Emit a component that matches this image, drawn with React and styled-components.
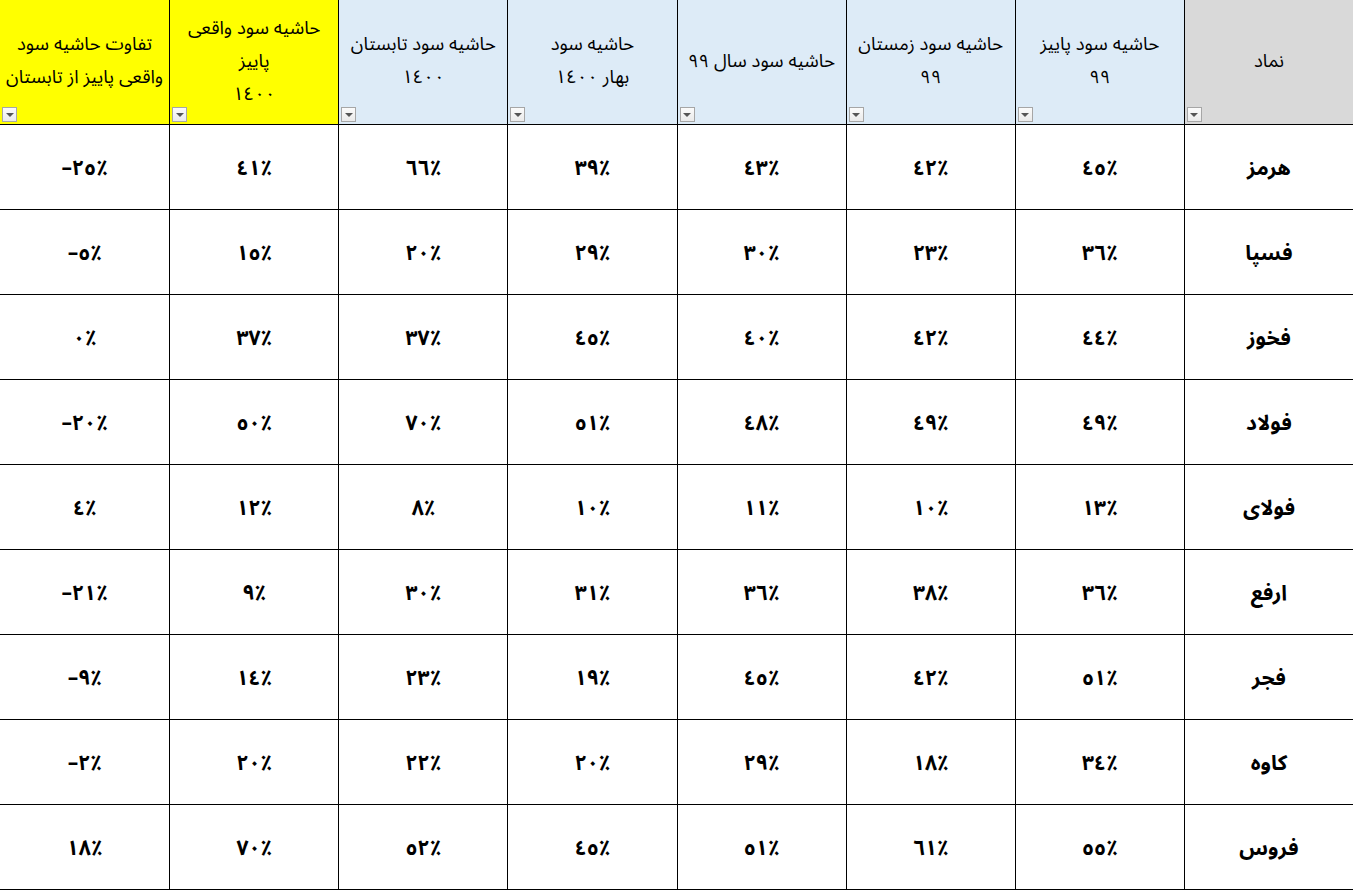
import React from "react";
import styled, { createGlobalStyle } from "styled-components";

const GlobalStyle = createGlobalStyle`
  html, body {
    margin: 0;
    padding: 0;
    background: #ffffff;
  }
  body {
    font-family: "Noto Sans Arabic", "DejaVu Sans", sans-serif;
  }
`;

const toArabic = n =>
  String(n).replace(/[0-9]/g, d => "٠١٢٣٤٥٦٧٨٩"[d]);

const Sheet = styled.div`
  width: 1353px;
  display: grid;
  grid-template-columns: repeat(8, 1fr);
  direction: rtl;
  color: #000;
`;

const headBg = {
  name: "#d9d9d9",
  blue: "#ddebf7",
  yellow: "#ffff00",
};

const HeadCell = styled.div`
  position: relative;
  height: 125px;
  box-sizing: border-box;
  background: ${p => headBg[p.$tone]};
  border-bottom: 1px solid #000;
  border-left: ${p => (p.$last ? "none" : "1px solid #000")};
  display: flex;
  align-items: center;
  justify-content: center;
  padding-bottom: 2px;
`;

const HeadText = styled.div`
  font-size: 18.5px;
  line-height: 33px;
  text-align: center;
  white-space: pre-line;
`;

const Filter = styled.span`
  position: absolute;
  left: 2px;
  bottom: 2px;
  width: 15px;
  height: 15px;
  box-sizing: border-box;
  border: 1px solid #a6a6a6;
  background: linear-gradient(#fbfbfb, #eaeaea);
  display: flex;
  align-items: center;
  justify-content: center;

  &::after {
    content: "";
    border-left: 4px solid transparent;
    border-right: 4px solid transparent;
    border-top: 4px solid #555;
    margin-top: 1px;
  }
`;

const Cell = styled.div`
  height: 85px;
  box-sizing: border-box;
  border-bottom: 1px solid #000;
  border-left: ${p => (p.$last ? "none" : "1px solid #000")};
  display: flex;
  align-items: center;
  justify-content: center;
  font-size: 21px;
  font-weight: bold;
  padding-top: 2px;
`;

const Value = styled.span`
  direction: ltr;
  unicode-bidi: isolate;
`;

const headers = [
  { text: "نماد", tone: "name" },
  { text: "حاشیه سود پاییز\n٩٩", tone: "blue" },
  { text: "حاشیه سود زمستان\n٩٩", tone: "blue" },
  { text: "حاشیه سود  سال ٩٩", tone: "blue" },
  { text: "حاشیه سود\nبهار  ١٤٠٠", tone: "blue" },
  { text: "حاشیه سود تابستان\n١٤٠٠", tone: "blue" },
  { text: "حاشیه سود واقعی\nپاییز\n١٤٠٠", tone: "yellow" },
  { text: "تفاوت حاشیه سود\nواقعی پاییز از تابستان", tone: "yellow" },
];

const rows = [
  ["هرمز", 45, 42, 43, 39, 66, 41, -25],
  ["فسپا", 36, 23, 30, 29, 20, 15, -5],
  ["فخوز", 44, 42, 40, 45, 37, 37, 0],
  ["فولاد", 49, 49, 48, 51, 70, 50, -20],
  ["فولای", 13, 10, 11, 10, 8, 12, 4],
  ["ارفع", 36, 38, 36, 31, 30, 9, -21],
  ["فجر", 51, 42, 45, 19, 23, 14, -9],
  ["کاوه", 34, 18, 29, 20, 22, 20, -2],
  ["فروس", 55, 61, 51, 45, 52, 70, 18],
];

const formatPct = v => (v < 0 ? "–" : "") + toArabic(Math.abs(v)) + "٪";

export default function App() {
  return (
    <>
      <GlobalStyle />
      <Sheet>
        {headers.map((h, i) => (
          <HeadCell key={i} $tone={h.tone} $last={i === headers.length - 1}>
            <HeadText>{h.text}</HeadText>
            <Filter />
          </HeadCell>
        ))}
        {rows.map((row, r) =>
          row.map((v, c) => (
            <Cell key={r + "-" + c} $last={c === row.length - 1}>
              {c === 0 ? v : <Value>{formatPct(v)}</Value>}
            </Cell>
          ))
        )}
      </Sheet>
    </>
  );
}
